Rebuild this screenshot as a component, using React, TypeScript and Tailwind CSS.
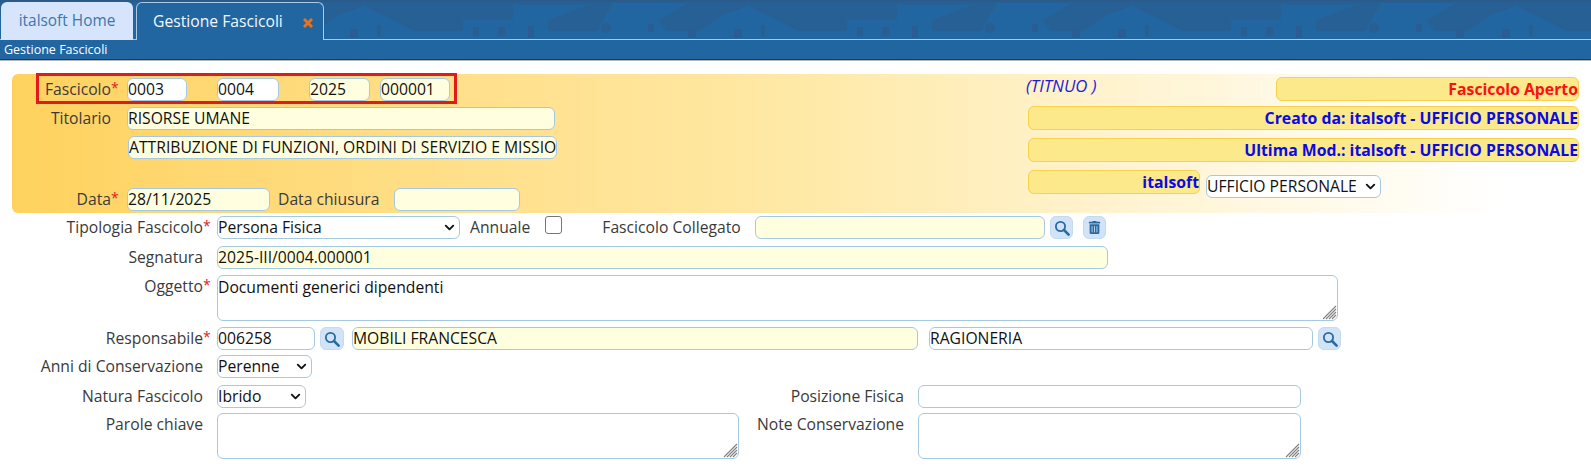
import type { ReactNode } from 'react'
import { ChevronDown } from 'lucide-react'
import { FaTrashAlt } from 'react-icons/fa'

const base =
  'h-[23px] rounded-[6px] border border-[#a6c9e2] px-0 text-[15.7px] leading-[19px] pb-[2px] text-[#111] outline-none'
const giallo = 'bg-[#ffffdf]'
const bianco = 'bg-white'
const infoBox =
  'h-[24px] rounded-[6px] border border-[#f7d24a] bg-[#fbe98b] text-right text-[15.8px] leading-[23px] font-bold text-[#0a0ae6] overflow-hidden whitespace-nowrap'

function Campo({ valore = '', className }: { valore?: string; className: string }) {
  return <input readOnly value={valore} className={`${base} ${className}`} />
}

function Area({ valore = '', className }: { valore?: string; className: string }) {
  return (
    <div className={`relative h-[46px] ${className}`}>
      <textarea
        readOnly
        value={valore}
        className="block h-full w-full resize-none rounded-[6px] border border-[#a6c9e2] bg-white px-0 pt-[2px] text-[15.7px] leading-[19px] text-[#111] outline-none"
      />
      <svg className="absolute bottom-[1px] right-[1px]" width="15" height="15" viewBox="0 0 15 15" aria-hidden="true">
        <path d="M1 14L14 1M4 14L14 4M7 14L14 7M10 14L14 10" stroke="#808080" strokeWidth="1.1" fill="none" />
      </svg>
    </div>
  )
}

function Scelta({ opzione, className }: { opzione: string; className: string }) {
  return (
    <div className={`relative h-[23px] ${className}`}>
      <select
        defaultValue={opzione}
        className="block h-full w-full appearance-none rounded-[6px] border border-[#a6c9e2] bg-white pl-0 text-[15.7px] leading-[19px] text-[#111] outline-none"
      >
        <option>{opzione}</option>
      </select>
      <ChevronDown className="pointer-events-none absolute right-[3px] top-[4px] text-[#111]" size={15} strokeWidth={3} />
    </div>
  )
}

function Etichetta({
  testo,
  obbligatorio,
  className = 'w-[210px]',
}: {
  testo: string
  obbligatorio?: boolean
  className?: string
}) {
  return (
    <label className={`shrink-0 pr-[7px] text-right text-[15.7px] leading-[22px] text-[#3a3a3a] ${className}`}>
      {testo}
      <span className="relative">
        {obbligatorio && <span className="absolute left-0 top-[-1px] text-[14px] text-[#e02020]">*</span>}
      </span>
    </label>
  )
}

function BottoneIcona({ children, className = '' }: { children: ReactNode; className?: string }) {
  return (
    <button className={`flex h-[23px] w-[23px] shrink-0 items-center justify-center rounded-[6px] border border-[#c5dbec] bg-[#d0e3f9] text-[#2a6a9e] ${className}`}>
      {children}
    </button>
  )
}

function IconaCerca() {
  return (
    <svg width="16" height="16" viewBox="0 0 16 16" fill="none" stroke="currentColor" aria-hidden="true">
      <circle cx="6.5" cy="6.5" r="4.6" strokeWidth="1.8" />
      <path d="M10 10l4.6 4.6" strokeWidth="2.6" strokeLinecap="round" />
    </svg>
  )
}

function Riga({ children, className = '' }: { children: ReactNode; className?: string }) {
  return <div className={`flex items-start ${className}`}>{children}</div>
}

// sagome di edifici ripetute sullo sfondo della barra
function SfondoCitta() {
  return (
    <svg className="absolute inset-0 h-full w-full" aria-hidden="true">
      <defs>
        <pattern id="citta" x="34" y="0" width="384" height="39" patternUnits="userSpaceOnUse">
          <path
            d="M0 31H384V39H0ZM45 20H130V39H45ZM95 5H170L130 20H95ZM175 39L195 3H270L240 20L255 39ZM305 15L330 6L378 30V39H270Z"
            fill="#2166a1"
          />
          <g fill="#285e91">
            <rect x="55" y="27" width="6" height="9" />
            <rect x="80" y="27" width="7" height="9" />
            <rect x="110" y="26" width="6" height="12" />
            <circle cx="188" cy="28" r="5" />
            <rect x="230" y="24" width="6" height="8" />
            <rect x="270" y="30" width="8" height="8" />
            <rect x="316" y="29" width="8" height="9" />
            <rect x="343" y="25" width="4" height="11" />
          </g>
        </pattern>
      </defs>
      <rect width="100%" height="100%" fill="#266094" />
      <rect width="100%" height="100%" fill="url(#citta)" />
      <rect width="100%" height="2" fill="#2b5b8a" />
    </svg>
  )
}

export default function App() {
  return (
    <div className="h-[471px] w-[1591px] overflow-hidden bg-white font-['Open_Sans','Noto_Sans',sans-serif]">
      <header className="relative h-[60px] border-b border-[#1d3f5c] bg-[#2166a1]">
        <div className="relative h-[40px] border-b border-[#a9cbe6]">
          <SfondoCitta />
          <nav className="relative flex h-[40px] items-end pl-[1px]">
            <div className="flex h-[38px] w-[132px] items-center justify-center rounded-t-[6px] bg-[#d6e5fb] text-[15.4px] text-[#3d77ac]">
              italsoft Home
            </div>
            <div className="relative ml-[3px] flex h-[38px] w-[188px] items-center rounded-t-[6px] border border-b-0 border-[#a9cbe6] bg-[#2166a1] pl-[16px] text-[15.7px] text-[#f2f7fc]">
              Gestione Fascicoli
              <svg className="absolute right-[9px] top-[14px]" width="12" height="12" viewBox="0 0 12 12" aria-hidden="true">
                <path d="M2 2l8 8M10 2l-8 8" stroke="#e8731c" strokeWidth="3" />
              </svg>
            </div>
          </nav>
        </div>
        <div className="px-[4px] text-[12.5px] leading-[19px] text-white">Gestione Fascicoli</div>
      </header>
      <div className="h-[1px] bg-[#b5b5b5]" />

      <main className="pt-[13px]">
        {/* testata gialla */}
        <section className="relative ml-[12px] flex h-[139px] w-[1568px] justify-between rounded-[6px] bg-gradient-to-r from-[#ffd25e] via-[#ffe9a6] to-white to-95%">
          <div className="flex flex-col pt-[4px]">
            <Riga>
              <Etichetta testo="Fascicolo" obbligatorio className="w-[106px]" />
              <div className="relative z-10 flex gap-[30px] pl-[9px]">
                <Campo valore="0003" className={`w-[60px] ${bianco}`} />
                <Campo valore="0004" className={`w-[62px] ${bianco}`} />
                <div className="flex gap-[10px]">
                  <Campo valore="2025" className={`w-[61px] ${giallo}`} />
                  <Campo valore="000001" className={`w-[70px] ${giallo}`} />
                </div>
              </div>
            </Riga>
            <Riga className="mt-[6px]">
              <Etichetta testo="Titolario" className="w-[106px]" />
              <Campo valore="RISORSE UMANE" className={`ml-[9px] w-[428px] ${giallo}`} />
            </Riga>
            <Campo
              valore="ATTRIBUZIONE DI FUNZIONI, ORDINI DI SERVIZIO E MISSIO"
              className={`ml-[116px] mt-[6px] w-[429px] ${giallo}`}
            />
            <Riga className="mt-[29px]">
              <Etichetta testo="Data" obbligatorio className="w-[106px]" />
              <Campo valore="28/11/2025" className={`ml-[9px] w-[143px] ${giallo}`} />
              <span className="ml-[8px] w-[116px] text-[15.7px] leading-[22px] text-[#3a3a3a]">Data chiusura</span>
              <Campo className={`w-[126px] ${giallo}`} />
            </Riga>
          </div>

          <div className="mr-[1px] flex w-[551px] flex-col pt-[3px]">
            <div className="flex items-start justify-between">
              <span className="-ml-[2px] -mt-[1px] text-[16.8px] leading-[20px] text-[#1a1ae0] italic">(TITNUO )</span>
              <div className={`${infoBox} w-[303px] text-[#ff1010]`}>Fascicolo Aperto</div>
            </div>
            <div className={`${infoBox} mt-[5px]`}>Creato da: italsoft - UFFICIO PERSONALE</div>
            <div className={`${infoBox} mt-[8px]`}>Ultima Mod.: italsoft - UFFICIO PERSONALE</div>
            <div className="mt-[8px] flex items-start">
              <div className={`${infoBox} w-[172px]`}>italsoft</div>
              <Scelta opzione="UFFICIO PERSONALE" className="ml-[6px] mt-[5px] w-[175px]" />
            </div>
          </div>
          <div className="absolute left-[24px] top-[-1px] h-[31px] w-[421px] border-[3px] border-[#e01b1b]" />
        </section>

        {/* campi del fascicolo */}
        <div className="flex flex-col pt-[3px]">
          <Riga>
            <Etichetta testo="Tipologia Fascicolo" obbligatorio />
            <Scelta opzione="Persona Fisica" className="ml-[7px] w-[243px]" />
            <span className="ml-[10px] text-[15.7px] leading-[22px] text-[#3a3a3a]">Annuale</span>
            <input type="checkbox" className="ml-[15px] h-[18px] w-[17px] appearance-none rounded-[3px] border border-[#767676] bg-white" />
            <span className="ml-[40px] w-[153px] text-[15.7px] leading-[22px] text-[#3a3a3a]">Fascicolo Collegato</span>
            <Campo className={`w-[290px] ${giallo}`} />
            <BottoneIcona className="ml-[5px]">
              <IconaCerca />
            </BottoneIcona>
            <BottoneIcona className="ml-[10px]">
              <FaTrashAlt size={13} />
            </BottoneIcona>
          </Riga>
          <Riga className="mt-[7px]">
            <Etichetta testo="Segnatura" />
            <Campo valore="2025-III/0004.000001" className={`ml-[7px] w-[891px] ${giallo}`} />
          </Riga>
          <Riga className="mt-[6px]">
            <Etichetta testo="Oggetto" obbligatorio />
            <Area valore="Documenti generici dipendenti" className="ml-[7px] w-[1121px]" />
          </Riga>
          <Riga className="mt-[6px]">
            <Etichetta testo="Responsabile" obbligatorio />
            <Campo valore="006258" className={`ml-[7px] w-[98px] ${bianco}`} />
            <BottoneIcona className="ml-[5px] w-[24px]">
              <IconaCerca />
            </BottoneIcona>
            <Campo valore="MOBILI FRANCESCA" className={`ml-[8px] w-[566px] ${giallo}`} />
            <Campo valore="RAGIONERIA" className={`ml-[11px] w-[384px] ${bianco}`} />
            <BottoneIcona className="ml-[5px]">
              <IconaCerca />
            </BottoneIcona>
          </Riga>
          <Riga className="mt-[5px]">
            <Etichetta testo="Anni di Conservazione" />
            <Scelta opzione="Perenne" className="ml-[7px] w-[95px]" />
          </Riga>
          <Riga className="mt-[7px]">
            <Etichetta testo="Natura Fascicolo" />
            <Scelta opzione="Ibrido" className="ml-[7px] w-[89px]" />
            <Etichetta testo="Posizione Fisica" className="w-[605px]" />
            <Campo className={`ml-[7px] w-[383px] ${bianco}`} />
          </Riga>
          <Riga className="mt-[5px]">
            <Etichetta testo="Parole chiave" />
            <Area className="ml-[7px] w-[522px]" />
            <Etichetta testo="Note Conservazione" className="w-[172px]" />
            <Area className="ml-[7px] w-[383px]" />
          </Riga>
        </div>
      </main>
    </div>
  )
}
